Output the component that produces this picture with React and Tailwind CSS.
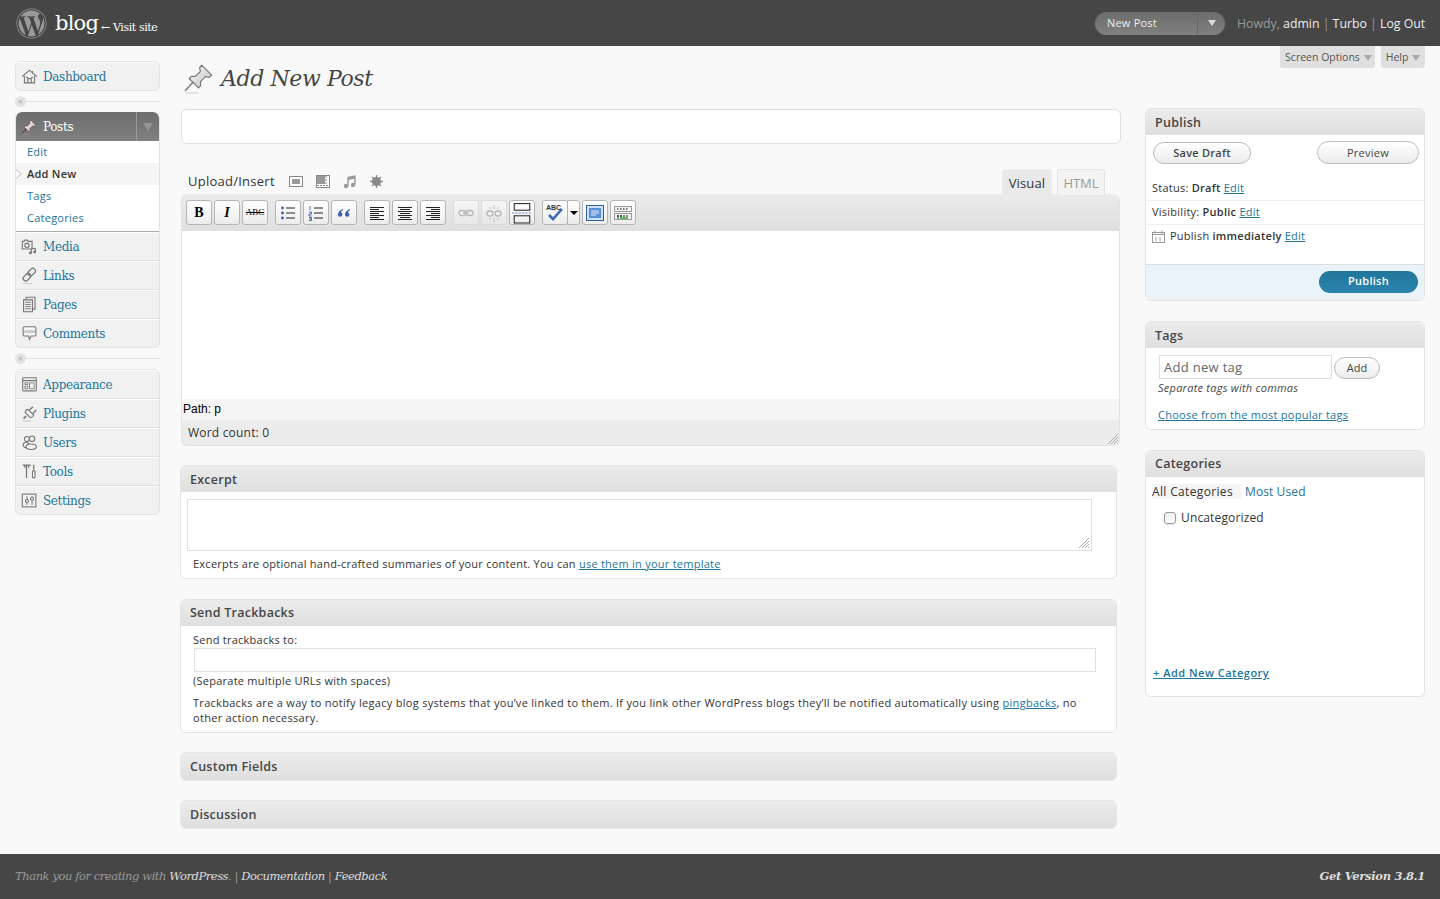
import React from 'react';
import { FaWordpress } from 'react-icons/fa';

const sans = "font-['Open_Sans','Noto_Sans',sans-serif]";
const serif = "font-['DejaVu_Serif','Liberation_Serif',serif]";

// Sidebar icons, all drawn on the same 20 unit grey grid
const Ico = ({ children, size = 17, className = '' }) => (
  <svg width={size} height={size} viewBox="0 0 20 20" fill="none" stroke="#777" strokeWidth="1.300" className={`shrink-0 ${className}`}>
    {children}
  </svg>
);

const HomeIcon = () => (
  <Ico>
    <path d="M1.5 10 10 2.5l8.5 7.5" />
    <path d="M4 9v8.5h12V9" fill="#eee" />
    <path d="M8 17.5v-5h4v5M13.5 3.5v3" />
    <path d="M6 11h2M12 11h2" />
  </Ico>
);
const PinIcon = ({ size = 20, dark }) => (
  <svg width={size} height={size} viewBox="0 0 30 30" className="shrink-0">
    <defs>
      <linearGradient id={dark ? 'pinD' : 'pinL'} x1="0" y1="0" x2="1" y2="1">
        <stop offset="0" stopColor="#fff" />
        <stop offset="1" stopColor={dark ? '#c9a9a9' : '#bbb'} />
      </linearGradient>
    </defs>
    <path d="M2 27 12 16" stroke={dark ? '#322' : '#888'} strokeWidth="1.6" />
    <path d="M2 29h13" stroke="#bbb" strokeWidth="1" opacity=".6" />
    <path d="M18 2 28 12l-3 2-3-1-5 5 0 4-2 2L6 15l2-2h4l5-5-1-3z" fill={`url(#${dark ? 'pinD' : 'pinL'})`} stroke={dark ? '#433' : '#777'} strokeWidth="1.1" strokeLinejoin="round" />
  </svg>
);
const MediaIcon = () => (
  <Ico>
    <path d="M1.5 4h2l1-1.5h3L8.500 4h4.500v9H1.500z" fill="#eee" />
    <circle cx="7" cy="8.500" r="2.500" />
    <path d="M12 13v4.500M17 12v4.500M12 13l5-1" />
    <circle cx="11" cy="17.500" r="1" fill="#777" />
    <circle cx="16" cy="16.500" r="1" fill="#777" />
  </Ico>
);
const LinkIcon = () => (
  <Ico>
    <rect x="9.500" y="1" width="6" height="10" rx="3" transform="rotate(45 12.500 6)" strokeWidth="1.500" />
    <rect x="4" y="7" width="6" height="10" rx="3" transform="rotate(45 7 12)" strokeWidth="1.500" />
    <path d="M3 19.500h10" stroke="#ccc" />
  </Ico>
);
const PagesIcon = () => (
  <Ico>
    <path d="M6 1.500h10.500v14H6z" fill="#eee" />
    <path d="M3 4.500h10.500v14H3z" fill="#e8e8e8" />
    <path d="M5 7.500h6.500M5 10h6.500M5 12.500h6.500M5 15h6.500" strokeWidth="1" />
  </Ico>
);
const CommentIcon = () => (
  <Ico>
    <path d="M4 2h12a1.500 1.500 0 0 1 1.500 1.500v8a1.500 1.500 0 0 1-1.500 1.500h-4l-2 4-1-4H4a1.500 1.500 0 0 1-1.500-1.500v-8A1.500 1.500 0 0 1 4 2z" fill="#f6f6f6" />
    <rect x="3.500" y="6" width="13" height="3.500" fill="#ccc" stroke="none" />
  </Ico>
);
const AppearanceIcon = () => (
  <Ico>
    <rect x="2" y="2" width="16" height="15.500" rx="1" />
    <path d="M2 5.500h16" />
    <path d="M4.500 8h3.500v2H4.500zM4.500 12h3.500v3H4.500zM10 8h5.500v7H10z" strokeWidth="1" />
  </Ico>
);
const PluginIcon = () => (
  <Ico>
    <path d="M3 16 6 13" strokeWidth="2" />
    <path d="m5 9 6 6c2-.2 3.500-1.500 4-3l-7-7C6 5.500 5 7.500 5 9z" fill="#eee" />
    <path d="M10 6 14 2M14 10l4-4" strokeWidth="1.600" />
    <path d="M2 19h10" stroke="#ccc" />
  </Ico>
);
const UsersIcon = () => (
  <Ico>
    <circle cx="7" cy="6" r="3" />
    <circle cx="13" cy="5.500" r="3.200" />
    <ellipse cx="6" cy="13" rx="3.500" ry="3" />
    <ellipse cx="12" cy="15" rx="6" ry="3.200" fill="#f1f1f1" />
  </Ico>
);
const ToolsIcon = () => (
  <Ico>
    <path d="M2 2.500h9.500M6.500 2.500v15M4.500 2.500v3M9 2.500v3" strokeWidth="1.500" />
    <path d="M15 2v6" strokeWidth="1.500" />
    <rect x="13.500" y="9" width="3" height="8.500" rx="1.200" />
  </Ico>
);
const SettingsIcon = () => (
  <Ico>
    <rect x="1.500" y="2.500" width="16" height="15" />
    <path d="M7 5v3M7 13v2M13 5v1M13 11v4" />
    <circle cx="7" cy="10.500" r="1.800" />
    <circle cx="13" cy="8" r="1.800" />
  </Ico>
);

const Arrow = ({ className = 'border-t-[#aaa]' }) => (
  <span className={`inline-block w-0 h-0 border-x-[4px] border-x-transparent border-t-[6px] ${className}`} />
);

const MenuRow = ({ icon, label, last }) => (
  <a className={`flex items-center ${last ? 'h-[28px]' : 'h-[29px] border-b border-[#dfdfdf]'} pl-[5px] border-t border-t-white`}>
    <span className="w-[22px] flex justify-start">{icon}</span>
    <span className={`${serif} text-[12px] tracking-[-0.35px] text-[#21759b]`}>{label}</span>
  </a>
);

const MenuSep = () => (
  <div className="flex items-center h-[11px] my-[5px]">
    <span className="w-[11px] h-[11px] rounded-full bg-[#e3e3e3] text-[#aaa] text-[9px] leading-[10px] text-center shrink-0">«</span>
    <span className="flex-1 h-px bg-[#e3e3e3]" />
  </div>
);

const Sidebar = () => (
  <nav className="w-[145px] shrink-0 ml-[15px] pt-[15px]">
    <div className="rounded-[6px] border border-[#e3e3e3] bg-[#f1f1f1] overflow-hidden">
      <MenuRow icon={<HomeIcon />} label="Dashboard" last />
    </div>
    <MenuSep />
    <div className="rounded-[6px] border border-[#e3e3e3] border-t-0 bg-[#f1f1f1] overflow-hidden">
      <div className="flex items-center h-[29px] rounded-t-[6px] bg-linear-to-b from-[#6d6d6d] to-[#808080] pl-[5px]">
        <span className="w-[22px] flex justify-start"><PinIcon size={16} dark /></span>
        <span className={`${serif} text-[12px] leading-[30px] tracking-[-0.35px] text-white flex-1 pt-px`}>Posts</span>
        <span className="w-[23px] h-full border-l border-[#999] flex items-center justify-center">
          <span className="inline-block w-0 h-0 border-x-[5px] border-x-transparent border-t-[8px] border-t-[#949494]" />
        </span>
      </div>
      <ul className={`${sans} text-[11px] tracking-[0.25px] bg-white border border-[#aaa] border-t-0 -mx-px h-[91px] relative`}>
        <li className="h-[22px] pl-[11px] leading-[22px] text-[#21759b]">Edit</li>
        <li className="h-[22px] pl-[11px] leading-[22px] font-semibold text-[#333] bg-[#f5f5f5] relative">
          Add New
          <svg width="7" height="12" viewBox="0 0 7 12" className="absolute -left-px top-[5px]">
            <path d="M0 .5 6 6 0 11.500" fill="#fff" stroke="#bbb" />
          </svg>
        </li>
        <li className="h-[22px] pl-[11px] leading-[22px] text-[#21759b]">Tags</li>
        <li className="h-[22px] pl-[11px] leading-[22px] text-[#21759b]">Categories</li>
      </ul>
      <MenuRow icon={<MediaIcon />} label="Media" />
      <MenuRow icon={<LinkIcon />} label="Links" />
      <MenuRow icon={<PagesIcon />} label="Pages" />
      <MenuRow icon={<CommentIcon />} label="Comments" last />
    </div>
    <MenuSep />
    <div className="rounded-[6px] border border-[#e3e3e3] bg-[#f1f1f1] overflow-hidden">
      <MenuRow icon={<AppearanceIcon />} label="Appearance" />
      <MenuRow icon={<PluginIcon />} label="Plugins" />
      <MenuRow icon={<UsersIcon />} label="Users" />
      <MenuRow icon={<ToolsIcon />} label="Tools" />
      <MenuRow icon={<SettingsIcon />} label="Settings" last />
    </div>
  </nav>
);

// Toolbar button glyphs
const G = ({ children, w = 18, h = 18 }) => (
  <svg width={w} height={h} viewBox="0 0 18 18" fill="none" stroke="#222">{children}</svg>
);
const AlignIcon = ({ rows }) => (
  <G>
    {rows.map(([a, b], i) => <path key={i} d={`M${a} ${3.5 + i * 2}H${b}`} strokeWidth="1" />)}
  </G>
);
const alignLeft = [[2, 16], [2, 11], [2, 16], [2, 11], [2, 16], [2, 11], [2, 16]];
const alignCenter = [[2, 16], [4, 14], [2, 16], [4, 14], [2, 16], [4, 14], [2, 16]];
const alignRight = [[2, 16], [7, 16], [2, 16], [7, 16], [2, 16], [7, 16], [2, 16]];

const TB = ({ children, disabled, w = 'w-[26px]' }) => (
  <span className={`${w} h-[25px] shrink-0 flex items-center justify-center rounded-[3px] border ${disabled ? 'border-[#d5d5d5] opacity-60' : 'border-[#b5b5b5]'} bg-linear-to-b from-white to-[#ececec]`}>
    {children}
  </span>
);

const Toolbar = () => (
  <div className="flex items-center h-[37px] pl-[4px] gap-[7px] bg-linear-to-b from-[#ebebeb] to-[#dfdfdf] rounded-t-[6px]">
    <div className="flex gap-[2px]">
      <TB><span className="font-['Liberation_Serif',serif] font-bold text-[14px] text-black">B</span></TB>
      <TB><span className="font-['Liberation_Serif',serif] font-bold italic text-[14px] text-black">I</span></TB>
      <TB><span className="font-['Liberation_Serif',serif] text-[9px] line-through text-black">ABC</span></TB>
    </div>
    <div className="flex gap-[2px]">
      <TB>
        <G>
          <path d="M7 4h9M7 9h9M7 14h9" strokeWidth="1" />
          <circle cx="3.500" cy="4" r="1.400" fill="#3a5fa8" stroke="none" />
          <circle cx="3.500" cy="9" r="1.400" fill="#3a5fa8" stroke="none" />
          <circle cx="3.500" cy="14" r="1.400" fill="#3a5fa8" stroke="none" />
        </G>
      </TB>
      <TB>
        <G>
          <path d="M7 4h9M7 9h9M7 14h9" strokeWidth="1" />
          <path d="M3 2v4M2 8h2.500v2H2v2h2.500M2 13.500h2.500v3H2M2 15h2.500" stroke="#3a5fa8" strokeWidth=".9" />
        </G>
      </TB>
      <TB>
        <G>
          <path d="M8 5C5 6 3 8 3 10.500a2.200 2.200 0 1 0 3-2c.2-1 1-2 2-2.500zM15 5c-3 1-5 3-5 5.500a2.200 2.200 0 1 0 3-2c.2-1 1-2 2-2.500z" fill="#3a5fa8" stroke="none" />
        </G>
      </TB>
    </div>
    <div className="flex gap-[2px]">
      <TB><AlignIcon rows={alignLeft} /></TB>
      <TB><AlignIcon rows={alignCenter} /></TB>
      <TB><AlignIcon rows={alignRight} /></TB>
    </div>
    <div className="flex gap-[2px]">
      <TB disabled>
        <G>
          <rect x="2" y="6.500" width="7" height="5" rx="2.500" stroke="#999" strokeWidth="1.300" />
          <rect x="9" y="6.500" width="7" height="5" rx="2.500" stroke="#999" strokeWidth="1.300" />
          <path d="M6 9h6" stroke="#999" strokeWidth="1.300" />
        </G>
      </TB>
      <TB disabled>
        <G>
          <rect x="2" y="7" width="6" height="5" rx="2.500" stroke="#999" strokeWidth="1.300" />
          <rect x="10" y="7" width="6" height="5" rx="2.500" stroke="#999" strokeWidth="1.300" />
          <path d="M9 1v4M9 14v4M4 3l2 2M14 3l-2 2M4 16l2-2M14 16l-2-2" stroke="#aaa" />
        </G>
      </TB>
      <TB>
        <G h={22} w={20}>
          <rect x="2" y="0.500" width="14" height="6" stroke="#333" />
          <path d="M0 9h18" stroke="#6a8fd0" strokeDasharray="2 1" />
          <rect x="2" y="11.500" width="14" height="6.500" stroke="#333" />
        </G>
      </TB>
    </div>
    <div className="flex gap-[2px]">
      <div className="flex">
        <TB>
          <span className="relative block w-[20px] h-[18px]">
            <span className="absolute left-[1px] top-0 font-['Liberation_Sans',sans-serif] font-bold text-[7px] leading-[8px] text-[#333]">ABC</span>
            <svg width="20" height="18" viewBox="0 0 20 18" className="absolute left-0 top-0">
              <path d="m4 11 4 4 9-10" stroke="#3f69b5" strokeWidth="2.600" fill="none" />
            </svg>
          </span>
        </TB>
        <span className="w-[13px] h-[25px] -ml-px flex items-center justify-center rounded-r-[3px] border border-[#b5b5b5] bg-linear-to-b from-white to-[#ececec]">
          <Arrow className="border-t-black !border-t-[4px]" />
        </span>
      </div>
      <TB>
        <svg width="18" height="16" viewBox="0 0 18 16">
          <rect x=".5" y=".5" width="17" height="15" fill="#cfe0f5" stroke="#2f5fa8" />
          <rect x="3" y="3" width="12" height="10" fill="#5b8ed6" />
          <path d="M5 6h8M5 8h8M5 10h5" stroke="#e7f0fb" />
        </svg>
      </TB>
      <TB>
        <svg width="18" height="16" viewBox="0 0 18 16">
          <rect x=".5" y="1.500" width="17" height="5" fill="#f2f2f2" stroke="#999" />
          <rect x=".5" y="8.500" width="17" height="6" fill="#f2f2f2" stroke="#999" />
          <path d="M3 4h1.500M6 4h1.500M9 4h1.500M12 4h1.500" stroke="#555" strokeWidth="1.400" />
          <path d="M3 11h2M6 11h2" stroke="#222" strokeWidth="1.400" />
          <path d="M9 11h2" stroke="#c33" strokeWidth="1.400" />
          <path d="M12 11h2M3 13h2" stroke="#38a" strokeWidth="1.400" />
          <path d="M6 13h8" stroke="#3a3" strokeWidth="1.400" />
        </svg>
      </TB>
    </div>
  </div>
);

const Resize = ({ className = '' }) => (
  <svg width="12" height="12" viewBox="0 0 12 12" className={`absolute ${className}`} stroke="#aaa" strokeWidth="1">
    <path d="M1 11 11 1M4 11l7-7M7 11l4-4M10 11l1-1" />
  </svg>
);

const BoxHead = ({ title, h = 'h-[26px]', leading = 'leading-[27px]' }) => (
  <h3 className={`${h} ${leading} px-[9px] text-[12.500px] font-semibold tracking-[0.25px] text-[#464646] bg-linear-to-b from-[#ececec] to-[#dfdfdf]`}>{title}</h3>
);

const Box = ({ title, children, className = '', leading }) => (
  <section className={`border border-[#e3e3e3] rounded-[6px] bg-white overflow-hidden ${className}`}>
    <BoxHead title={title} leading={leading} />
    {children}
  </section>
);

const Closed = ({ title, className = '' }) => (
  <section className={`border border-[#e6e6e6] rounded-[6px] overflow-hidden w-[937px] ${className}`}>
    <BoxHead title={title} h="h-[27px]" />
  </section>
);

const Pill = ({ children, className = '' }) => (
  <span className={`flex items-center justify-center rounded-full border border-[#bbb] bg-linear-to-b from-white to-[#ececec] text-[#464646] ${className}`}>{children}</span>
);

const Link = ({ children, className = '' }) => <a className={`text-[#21759b] underline ${className}`}>{children}</a>;

const MainColumn = () => (
  <main className="w-[940px] shrink-0 ml-[21px] relative">
    <div className="flex items-center h-[32px] mt-[16px] pl-[2px]">
      <PinIcon size={31} />
      <h2 className={`${serif} italic text-[22px] tracking-[-0.4px] text-[#464646] ml-[7px]`}>Add New Post</h2>
    </div>
    <div className="h-[35px] mt-[15px] border border-[#dfdfdf] rounded-[6px] bg-white" />

    <div className="flex items-end justify-between h-[26px] mt-[25px] pr-[16px]">
      <div className="flex items-center h-[26px] pl-[7px] pb-[1px]">
        <span className="text-[13px] text-[#333] tracking-[0.25px]">Upload/Insert</span>
        <span className="flex items-center gap-[13px] ml-[14px]">
          <svg width="14" height="13" viewBox="0 0 14 13"><rect x=".5" y="1.500" width="13" height="10" fill="#fff" stroke="#888" /><rect x="3" y="4" width="8" height="5" fill="#999" /></svg>
          <svg width="14" height="13" viewBox="0 0 14 13"><rect x=".5" y=".5" width="13" height="12" fill="#fff" stroke="#888" /><rect x="1" y="1" width="8" height="8" fill="#999" /><path d="M10 1v8M1 10.500h12" stroke="#888" strokeDasharray="2 1" /></svg>
          <svg width="14" height="14" viewBox="0 0 14 14"><path d="M5 3v8M12 1.500v8M5 2.500l7-1.500v2l-7 1.500z" stroke="#999" strokeWidth="1.400" fill="#999" /><circle cx="3" cy="11" r="2.200" fill="#999" /><circle cx="10" cy="10" r="2.200" fill="#999" /></svg>
          <svg width="13" height="13" viewBox="0 0 13 13"><circle cx="6.500" cy="6.500" r="4.500" fill="#888" /><path d="M6.500 0v13M0 6.500h13M2 2l9 9M11 2l-9 9" stroke="#888" strokeWidth="1.300" /></svg>
        </span>
      </div>
      <div className="flex gap-[5px] items-end">
        <span className="w-[50px] h-[26px] rounded-t-[3px] border border-b-0 border-[#eee] bg-[#e9e9e9] text-[13px] tracking-[0.15px] leading-[27px] text-center text-[#333]">Visual</span>
        <span className="w-[48px] h-[26px] rounded-t-[3px] border border-b-0 border-[#e3e3e3] bg-[#f3f3f3] text-[13px] leading-[27px] text-center text-[#999]">HTML</span>
      </div>
    </div>

    <div className="w-[939px] border border-[#e3e3e3] border-t-0 rounded-[6px] overflow-hidden -mt-px">
      <Toolbar />
      <div className="h-[168px] bg-white" />
      <div className="h-[21px] bg-[#f5f5f5] pl-[1px] font-['Liberation_Sans',sans-serif] text-[12px] leading-[20px] text-black">Path: p</div>
      <div className="h-[25px] bg-[#ececec] pl-[6px] text-[12px] tracking-[0.2px] leading-[25px] text-[#333] relative">
        Word count: 0
        <Resize className="right-0 bottom-0" />
      </div>
    </div>

    <Box title="Excerpt" className="w-[937px] mt-[19px] -ml-px h-[114px]">
      <div className="relative h-[52px] w-[905px] mt-[7px] ml-[6px] border border-[#dfdfdf]">
        <Resize className="right-[1px] bottom-[1px]" />
      </div>
      <p className="text-[11px] tracking-[0.25px] text-[#333] ml-[12px] mt-[6px] leading-[14px]">
        Excerpts are optional hand-crafted summaries of your content. You can <Link>use them in your template</Link>
      </p>
    </Box>

    <Box title="Send Trackbacks" leading="leading-[25px]" className="w-[937px] mt-[20px] -ml-px h-[134px]">
      <div className="pl-[12px] text-[11px] tracking-[0.25px] leading-[15px] text-[#333]">
        <p className="mt-[6px]">Send trackbacks to:</p>
        <div className="h-[24px] w-[902px] ml-px mt-[1px] border border-[#dfdfdf]" />
        <p className="mt-[1px]">(Separate multiple URLs with spaces)</p>
        <p className="mt-[7px] w-[900px] tracking-[0.295px]">
          Trackbacks are a way to notify legacy blog systems that you’ve linked to them. If you link other WordPress blogs they’ll be notified automatically using <Link>pingbacks</Link>, no other action necessary.
        </p>
      </div>
    </Box>

    <Closed title="Custom Fields" className="mt-[19px] -ml-px" />
    <Closed title="Discussion" className="mt-[19px] -ml-px" />
  </main>
);

const Meta = ({ children, border, className = '' }) => (
  <div className={`flex items-center h-[24px] pl-[6px] text-[11px] tracking-[0.25px] text-[#333] ${border ? 'border-b border-[#f0f0f0]' : ''} ${className}`}>{children}</div>
);

const SideColumn = () => (
  <aside className="w-[280px] shrink-0 ml-[24px] pt-[62px]">
    <Box title="Publish" className="h-[193px] flex flex-col">
      <div className="flex justify-between h-[23px] mt-[6px] pl-[7px] pr-[5px] text-[11px] tracking-[0.25px]">
        <Pill className="w-[98px] h-[22px] mt-px font-semibold">Save Draft</Pill>
        <Pill className="w-[102px] h-[23px] pt-[2px]">Preview</Pill>
      </div>
      <div className="mt-[13px]">
        <Meta border><span>Status: <b className="font-semibold">Draft</b> <Link>Edit</Link></span></Meta>
        <Meta border><span>Visibility: <b className="font-semibold">Public</b> <Link>Edit</Link></span></Meta>
        <Meta className="-mt-px">
          <svg width="13" height="13" viewBox="0 0 13 13" className="mr-[5px]" fill="none" stroke="#999">
            <rect x=".5" y="2.500" width="12" height="10" />
            <path d="M.5 4.500h12M3 .5v3M10 .5v3M4 7v4M8 7v4" />
          </svg>
          <span>Publish <b className="font-semibold">immediately</b> <Link>Edit</Link></span>
        </Meta>
      </div>
      <div className="mt-auto flex justify-end items-center h-[36px] pr-[6px] pb-[2px] bg-[#eaf2fa] border-t border-[#dfdfdf]">
        <span className="w-[99px] h-[22px] rounded-full bg-linear-to-b from-[#21759b] to-[#2b84ad] text-white text-[11px] tracking-[0.25px] font-semibold flex items-center justify-center">Publish</span>
      </div>
    </Box>

    <Box title="Tags" className="h-[109px] mt-[20px]">
      <div className="flex items-center mt-[7px] ml-[13px]">
        <div className="w-[173px] h-[24px] border border-[#dfdfdf] pl-[4px] text-[13px] tracking-[0.3px] leading-[22px] text-[#666]">Add new tag</div>
        <Pill className="w-[46px] h-[22px] ml-[2px] mt-[2px] text-[11px]">Add</Pill>
      </div>
      <p className="ml-[12px] mt-[1px] text-[11px] tracking-[0.25px] italic leading-[15px] text-[#464646]">Separate tags with commas</p>
      <Link className="block ml-[12px] mt-[12px] text-[11px] tracking-[0.25px] leading-[15px]">Choose from the most popular tags</Link>
    </Box>

    <Box title="Categories" leading="leading-[25px]" className="h-[247px] mt-[20px] flex flex-col">
      <div className="flex items-center mt-[7px] ml-[6px] text-[12px] leading-[15px]">
        <span className="w-[89px] bg-[#f5f5f5] tracking-[0.35px] text-[#333]">All Categories</span>
        <span className="ml-[4px] tracking-[0.1px] text-[#21759b]">Most Used</span>
      </div>
      <label className="flex items-center mt-[10px] ml-[18px] text-[12px] tracking-[0.15px] text-[#333]">
        <span className="w-[12px] h-[12px] rounded-[3px] border border-[#999] bg-linear-to-b from-[#eee] to-white shadow-sm" />
        <span className="ml-[5px]">Uncategorized</span>
      </label>
      <Link className="block ml-[7px] mt-[138px] text-[11px] tracking-[0.5px] font-semibold">+ Add New Category</Link>
    </Box>
  </aside>
);

const App = () => (
  <div className={`${sans} min-h-[899px] flex flex-col bg-[#f9f9f9]`}>
    <header className="h-[46px] shrink-0 flex items-center bg-[#464646] pl-[16px] pr-[15px]">
      <FaWordpress size={31} className="text-[#999] shrink-0" />
      <span className={`${serif} text-[21px] tracking-[-0.8px] text-white ml-[8px] mt-[2px]`}>blog</span>
      <span className={`${serif} text-[11px] tracking-[-0.4px] text-white ml-[3px] mt-[10px]`}>← Visit site</span>
      <div className="ml-auto flex items-center">
        <div className="flex items-center w-[130px] h-[23px] rounded-full bg-linear-to-b from-[#6d6d6d] to-[#808080] text-[11px] tracking-[0.2px] text-[#eee] font-medium">
          <span className="flex-1 pl-[12px]">New Post</span>
          <span className="w-[28px] h-full border-l border-[#666] flex items-center justify-center">
            <Arrow className="border-t-[#ddd]" />
          </span>
        </div>
        <div className="ml-[12px] mt-[2px] w-[188px] whitespace-nowrap text-[12.300px] text-[#eee]">
          <span className="text-[#999]">Howdy, </span>admin <span className="text-[#999]">|</span> Turbo <span className="text-[#999]">|</span> Log Out
        </div>
      </div>
    </header>

    <div className="flex justify-end gap-[6px] pr-[15px] h-0 relative z-10">
      <div className="h-[22px] w-[95px] shrink-0 flex items-center justify-center gap-[4px] pt-px pl-[2px] rounded-b-[3px] bg-[#dfdfdf] text-[10.500px] text-[#555]">
        Screen Options <Arrow />
      </div>
      <div className="h-[22px] w-[44px] shrink-0 flex items-center justify-center gap-[4px] pt-px rounded-b-[3px] bg-[#dfdfdf] text-[10.500px] text-[#555]">
        Help <Arrow />
      </div>
    </div>

    <div className="flex flex-1">
      <Sidebar />
      <MainColumn />
      <SideColumn />
    </div>

    <footer className="h-[45px] shrink-0 flex items-center justify-between bg-[#464646] px-[15px] text-[#999]">
      <p className={`${serif} italic text-[11.500px] tracking-[-0.43px]`}>
        Thank you for creating with <a className="text-[#ddd]">WordPress</a>. | <a className="text-[#ddd]">Documentation</a> | <a className="text-[#ddd]">Feedback</a>
      </p>
      <p className={`${serif} italic font-bold text-[11.500px] tracking-[-0.3px] text-[#ddd]`}>Get Version 3.8.1</p>
    </footer>
  </div>
);

export default App;
